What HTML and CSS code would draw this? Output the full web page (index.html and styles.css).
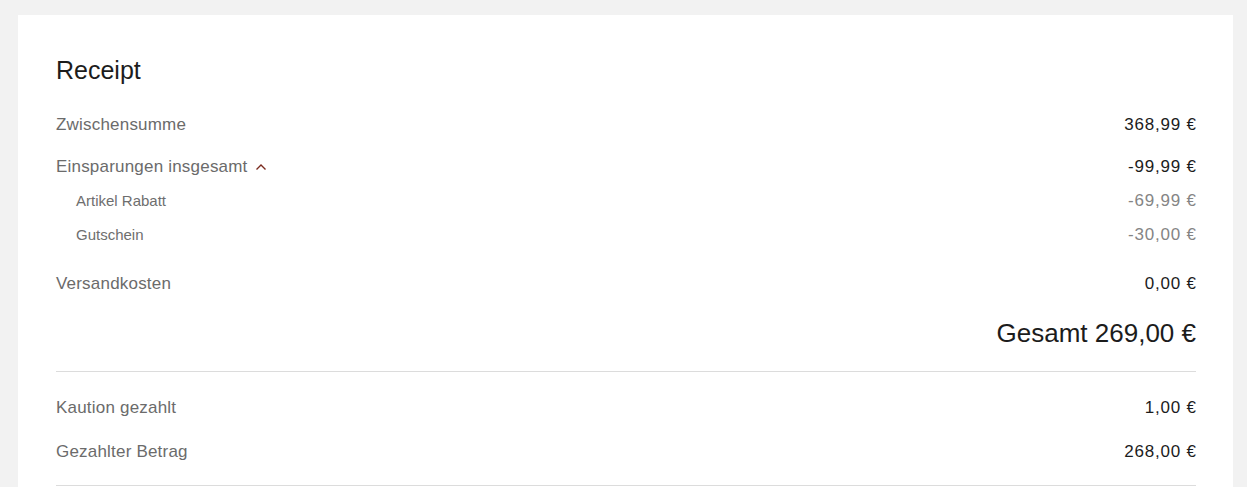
FILE: index.html
```html
<!DOCTYPE html>
<html lang="de">
<head>
<meta charset="utf-8">
<title>Receipt</title>
<link rel="stylesheet" href="styles.css">
</head>
<body>
<main class="card">
  <h2 class="title">Receipt</h2>
  <div class="rows">
    <div class="row">
      <span class="label">Zwischensumme</span>
      <span class="value">368,99 €</span>
    </div>
    <div class="group">
      <div class="row">
        <span class="label">Einsparungen insgesamt
          <svg class="chev" width="12" height="8" viewBox="0 0 12 8" aria-hidden="true"><path d="M1.5 6.5 L6 2 L10.5 6.5" fill="none" stroke="#7a2a1e" stroke-width="1.4"/></svg>
        </span>
        <span class="value">-99,99 €</span>
      </div>
      <div class="sub">
        <div class="subrow"><span class="sublabel">Artikel Rabatt</span><span class="subvalue">-69,99 €</span></div>
        <div class="subrow"><span class="sublabel">Gutschein</span><span class="subvalue">-30,00 €</span></div>
      </div>
    </div>
    <div class="row">
      <span class="label">Versandkosten</span>
      <span class="value">0,00 €</span>
    </div>
    <div class="total">Gesamt 269,00 €</div>
  </div>
  <hr class="divider">
  <div class="rows paid">
    <div class="row">
      <span class="label">Kaution gezahlt</span>
      <span class="value">1,00 €</span>
    </div>
    <div class="row">
      <span class="label">Gezahlter Betrag</span>
      <span class="value">268,00 €</span>
    </div>
  </div>
  <hr class="divider">
</main>
</body>
</html>
```

FILE: styles.css
```css
html, body {
  margin: 0;
  background: #f2f2f2;
}
body {
  padding: 15px 14px 0 18px;
  font-family: "Liberation Sans", Arial, sans-serif;
  color: #1c1c1c;
}
.card {
  background: #fff;
  padding: 39px 37px 40px 38px;
}
.title {
  margin: 0 0 27px;
  font-size: 25px;
  line-height: 32px;
  font-weight: 400;
  color: #1c1c1c;
}
.rows {
  display: flex;
  flex-direction: column;
  gap: 18px;
}
.row {
  display: flex;
  justify-content: space-between;
  align-items: center;
  font-size: 17px;
  line-height: 24px;
}
.label {
  color: #6b6b6b;
  letter-spacing: 0.2px;
  display: flex;
  align-items: center;
  gap: 7px;
}
.value {
  color: #1c1c1c;
  letter-spacing: 0.8px;
  margin-right: -0.8px;
}
.chev {
  display: block;
  margin-top: -1px;
}
.sub {
  display: flex;
  flex-direction: column;
  gap: 12px;
  margin-top: 11px;
  padding: 0 0 8px 20px;
}
.subrow {
  display: flex;
  justify-content: space-between;
  align-items: center;
  line-height: 22px;
}
.sublabel {
  font-size: 15px;
  color: #6e6e6e;
}
.subvalue {
  font-size: 17px;
  color: #858585;
  letter-spacing: 0.8px;
  margin-right: -0.8px;
}
.total {
  text-align: right;
  font-size: 26px;
  line-height: 32px;
  margin-top: 3px;
  color: #1c1c1c;
}
.divider {
  border: 0;
  border-top: 1px solid #dcdcdc;
  margin: 22px 0 24px;
}
.paid {
  gap: 20px;
}
.paid + .divider {
  margin-top: 21px;
}
```
